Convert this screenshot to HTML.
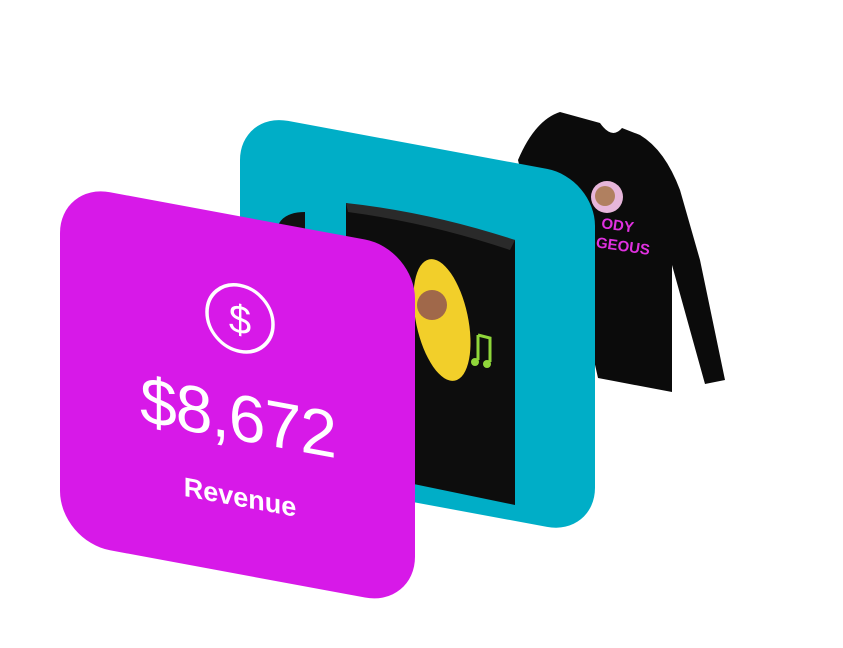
<!DOCTYPE html>
<html><head><meta charset="utf-8"><style>
html,body{margin:0;padding:0;background:#fff;width:843px;height:648px;overflow:hidden}
svg{display:block}
</style></head><body>
<svg width="843" height="648" viewBox="0 0 843 648" xmlns="http://www.w3.org/2000/svg">
  <!-- shirt -->
  <g fill="#0b0b0b">
    <path d="M560 112 L600 123 Q612 140 622 128 L640 135 Q665 150 680 190 L700 260 L725 380 L705 384 L690 330 L672 265 L672 392 L598 378 L585 320 Q560 260 530 210 L518 160 Q535 120 560 112 Z"/>
  </g>
  <circle cx="607" cy="197" r="16" fill="#e6b6da"/>
  <circle cx="605" cy="196" r="10" fill="#b08060"/>
  <text x="600" y="230" font-family="Liberation Sans, sans-serif" font-weight="bold" font-size="15" fill="#e030e0" transform="rotate(8 615 235)">ODY</text>
  <text x="596" y="250" font-family="Liberation Sans, sans-serif" font-weight="bold" font-size="15" fill="#e030e0" transform="rotate(8 615 245)">GEOUS</text>
  <!-- teal card -->
  <g transform="translate(240,112) skewY(10.5)">
    <rect x="0" y="0" width="355" height="358" rx="48" fill="#00AEC7"/>
  </g>
  <!-- mug -->
  <g>
    <path d="M305 212 Q272 212 276 245 L305 245 Z" fill="#111"/>
    <path d="M346 203 L515 240 L515 505 L346 470 Z" fill="#0d0d0d"/>
    <path d="M346 203 Q430 212 515 240 L510 250 Q430 223 348 212 Z" fill="#2a2a2a"/>
    <ellipse cx="442" cy="320" rx="26" ry="62" fill="#f2cf2a" transform="rotate(-12 442 320)"/>
    <circle cx="432" cy="305" r="15" fill="#a0684a"/>
    <path d="M478 335 L478 360 M478 335 L490 338 L490 362" stroke="#8fd63a" stroke-width="3" fill="none"/>
    <circle cx="475" cy="362" r="4" fill="#8fd63a"/><circle cx="487" cy="364" r="4" fill="#8fd63a"/>
  </g>
  <!-- magenta card -->
  <g transform="translate(60,183) skewY(10.5)">
    <rect x="0" y="0" width="355" height="358" rx="50" fill="#D719E8"/>
    <circle cx="180" cy="102" r="33" fill="none" stroke="#fff" stroke-width="3.5"/>
    <text x="180" y="117" text-anchor="middle" font-family="Liberation Sans, sans-serif" font-size="40" fill="#fff">$</text>
    <text x="178" y="224" text-anchor="middle" font-family="Liberation Sans, sans-serif" font-size="66" fill="#fff" letter-spacing="-1">$8,672</text>
    <text x="180" y="290" text-anchor="middle" font-family="Liberation Sans, sans-serif" font-weight="bold" font-size="27" fill="#fff">Revenue</text>
  </g>
</svg>
</body></html>
